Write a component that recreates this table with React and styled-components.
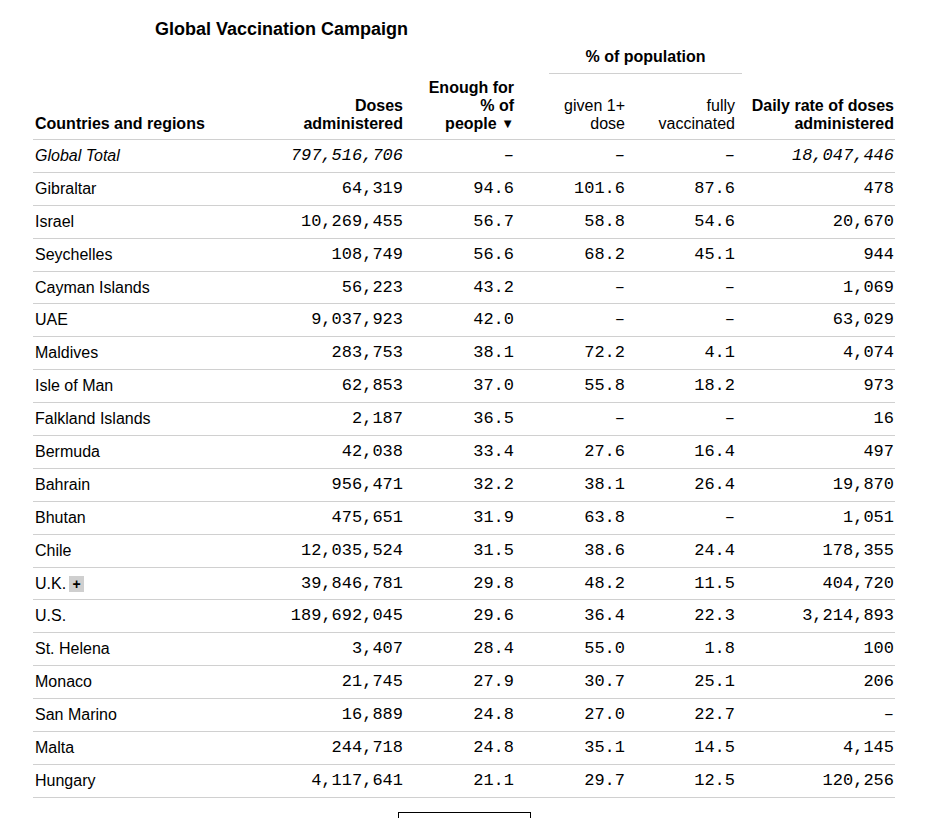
import React from "react";
import styled, { createGlobalStyle } from "styled-components";

const Global = createGlobalStyle`
  html, body { margin: 0; padding: 0; background: #fff; }
  body { font-family: "Liberation Sans", Arial, sans-serif; color: #000; }
`;

const COLS = "227px 150px 111px 111px 110px 153px";

const Page = styled.div`
  padding: 18px 0 0 33px;
  width: 862px;
`;

const Title = styled.h1`
  margin: 0 0 0 122px;
  font-size: 18px;
  line-height: 22px;
  font-weight: 700;
`;

const GroupRow = styled.div`
  display: grid;
  grid-template-columns: ${COLS};
  margin-top: 8px;
`;

const GroupLabel = styled.div`
  grid-column: 4 / 6;
  margin-left: 28px;
  text-align: center;
  font-size: 16px;
  line-height: 18px;
  font-weight: 700;
  padding-bottom: 7px;
  border-bottom: 1px solid #d0d0d0;
`;

const HeadRow = styled.div`
  display: grid;
  grid-template-columns: ${COLS};
  align-items: end;
  margin-top: 5px;
  border-bottom: 1px solid #d0d0d0;
`;

const Th = styled.div`
  font-size: 16px;
  line-height: 18px;
  font-weight: ${(p) => (p.$light ? 400 : 700)};
  text-align: ${(p) => (p.$left ? "left" : "right")};
  padding: 0 ${(p) => (p.$last ? "1px" : "7px")} 6px ${(p) => (p.$left ? "2px" : "0")};
`;

const Arrow = styled.span`
  font-size: 13px;
  vertical-align: 1px;
`;

const Row = styled.div`
  display: grid;
  grid-template-columns: ${COLS};
  align-items: center;
  box-sizing: border-box;
  height: 32.9px;
  border-bottom: 1px solid #d0d0d0;
  font-style: ${(p) => (p.$total ? "italic" : "normal")};
`;

const Name = styled.div`
  padding-left: 2px;
  font-size: 16px;
  line-height: 20px;
  display: flex;
  align-items: center;
`;

const Num = styled.div`
  font-family: "Liberation Mono", "DejaVu Sans Mono", monospace;
  font-size: 17px;
  line-height: 20px;
  text-align: right;
  padding-right: ${(p) => (p.$last ? "1px" : "7px")};
`;

const Badge = styled.span`
  display: inline-flex;
  align-items: center;
  justify-content: center;
  width: 15px;
  height: 16px;
  margin-left: 3px;
  background: #cfcfcf;
  font-size: 14px;
  font-weight: 700;
  font-style: normal;
`;

const MoreButton = styled.button`
  display: block;
  margin: 14px 0 0 365px;
  width: 133px;
  height: 36px;
  background: #fff;
  border: 1px solid #000;
  padding: 0;
`;

const D = "\u2013";

const rows = [
  ["Gibraltar", "64,319", "94.6", "101.6", "87.6", "478"],
  ["Israel", "10,269,455", "56.7", "58.8", "54.6", "20,670"],
  ["Seychelles", "108,749", "56.6", "68.2", "45.1", "944"],
  ["Cayman Islands", "56,223", "43.2", D, D, "1,069"],
  ["UAE", "9,037,923", "42.0", D, D, "63,029"],
  ["Maldives", "283,753", "38.1", "72.2", "4.1", "4,074"],
  ["Isle of Man", "62,853", "37.0", "55.8", "18.2", "973"],
  ["Falkland Islands", "2,187", "36.5", D, D, "16"],
  ["Bermuda", "42,038", "33.4", "27.6", "16.4", "497"],
  ["Bahrain", "956,471", "32.2", "38.1", "26.4", "19,870"],
  ["Bhutan", "475,651", "31.9", "63.8", D, "1,051"],
  ["Chile", "12,035,524", "31.5", "38.6", "24.4", "178,355"],
  ["U.K.", "39,846,781", "29.8", "48.2", "11.5", "404,720", true],
  ["U.S.", "189,692,045", "29.6", "36.4", "22.3", "3,214,893"],
  ["St. Helena", "3,407", "28.4", "55.0", "1.8", "100"],
  ["Monaco", "21,745", "27.9", "30.7", "25.1", "206"],
  ["San Marino", "16,889", "24.8", "27.0", "22.7", D],
  ["Malta", "244,718", "24.8", "35.1", "14.5", "4,145"],
  ["Hungary", "4,117,641", "21.1", "29.7", "12.5", "120,256"],
];

export default function App() {
  return (
    <>
      <Global />
      <Page>
        <Title>Global Vaccination Campaign</Title>
        <GroupRow>
          <GroupLabel>% of population</GroupLabel>
        </GroupRow>
        <HeadRow>
          <Th $left>Countries and regions</Th>
          <Th>Doses<br />administered</Th>
          <Th>Enough for<br />% of<br />people <Arrow>▼</Arrow></Th>
          <Th $light>given 1+<br />dose</Th>
          <Th $light>fully<br />vaccinated</Th>
          <Th $last>Daily rate of doses administered</Th>
        </HeadRow>
        <Row $total>
          <Name>Global Total</Name>
          <Num>797,516,706</Num>
          <Num>{D}</Num>
          <Num>{D}</Num>
          <Num>{D}</Num>
          <Num $last>18,047,446</Num>
        </Row>
        {rows.map((r) => (
          <Row key={r[0]}>
            <Name>
              {r[0]}
              {r[6] && <Badge>+</Badge>}
            </Name>
            <Num>{r[1]}</Num>
            <Num>{r[2]}</Num>
            <Num>{r[3]}</Num>
            <Num>{r[4]}</Num>
            <Num $last>{r[5]}</Num>
          </Row>
        ))}
        <MoreButton aria-label="Show all" />
      </Page>
    </>
  );
}
